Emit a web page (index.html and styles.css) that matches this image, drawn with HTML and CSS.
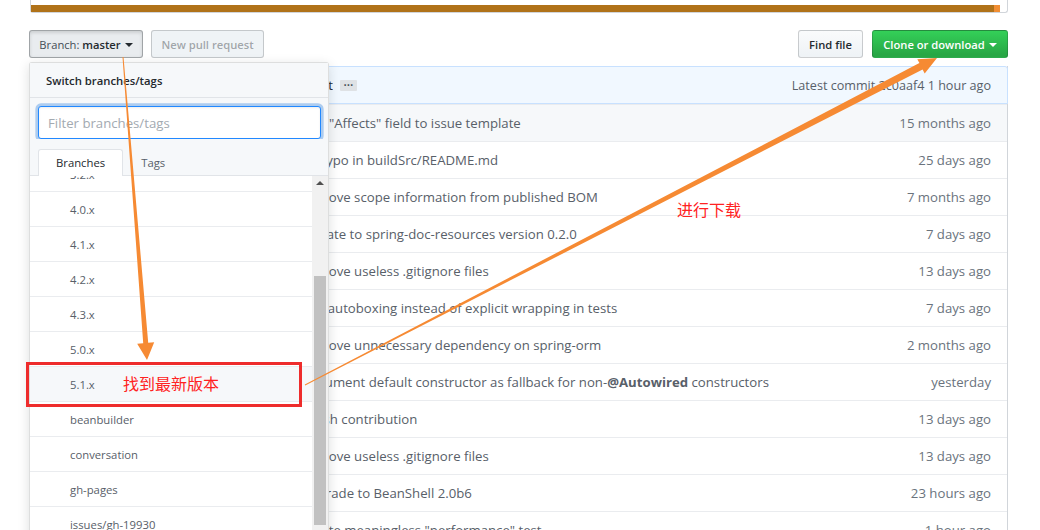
FILE: index.html
```html
<!DOCTYPE html>
<html>
<head>
    <meta charset="UTF-8">
    <link rel="stylesheet" href="styles.css">
</head>
<body>
<div class="page">
    <div class="repo">
        <div class="lang-stats">
            <span class="lang lang-java"></span>
            <span class="lang lang-kotlin"></span>
            <span class="lang lang-rest"></span>
        </div>

        <div class="file-nav">
            <div class="nav-left">
                <button class="btn btn-branch btn-selected"><span class="btn-label">Branch:</span>&nbsp;master<span class="caret"></span></button>
                <button class="btn btn-pr" disabled>New pull request</button>
            </div>
            <div class="nav-right">
                <button class="btn btn-find">Find file</button>
                <button class="btn btn-clone">Clone or download<span class="caret"></span></button>
            </div>
        </div>

        <div class="file-wrap">
            <div class="commit-tease">
                <span class="tease-msg">Upgrade to Kotlin 1.3.11 and Dokka 0.9.17 in build script</span>
                <span class="hidden-text">&hellip;</span>
                <span class="tease-right">Latest commit <span class="sha">2c0aaf4</span> 1 hour ago</span>
            </div>
            <div class="file-row hover">
                <span class="file-name">.github</span>
                <span class="file-msg">Add "Affects" field to issue template</span>
                <span class="file-age">15 months ago</span>
            </div>
            <div class="file-row">
                <span class="file-name">buildSrc</span>
                <span class="file-msg">Fix typo in buildSrc/README.md</span>
                <span class="file-age">25 days ago</span>
            </div>
            <div class="file-row">
                <span class="file-name">framework-bom</span>
                <span class="file-msg">Remove scope information from published BOM</span>
                <span class="file-age">7 months ago</span>
            </div>
            <div class="file-row">
                <span class="file-name">gradle</span>
                <span class="file-msg">Update to spring-doc-resources version 0.2.0</span>
                <span class="file-age">7 days ago</span>
            </div>
            <div class="file-row">
                <span class="file-name">integration-tests</span>
                <span class="file-msg">Remove useless .gitignore files</span>
                <span class="file-age">13 days ago</span>
            </div>
            <div class="file-row">
                <span class="file-name">spring-aop</span>
                <span class="file-msg">Use autoboxing instead of explicit wrapping in tests</span>
                <span class="file-age">7 days ago</span>
            </div>
            <div class="file-row">
                <span class="file-name">spring-aspects</span>
                <span class="file-msg">Remove unnecessary dependency on spring-orm</span>
                <span class="file-age">2 months ago</span>
            </div>
            <div class="file-row">
                <span class="file-name">spring-beans</span>
                <span class="file-msg">Document default constructor as fallback for non-<b>@Autowired</b> constructors</span>
                <span class="file-age">yesterday</span>
            </div>
            <div class="file-row">
                <span class="file-name">spring-context-indexer</span>
                <span class="file-msg">Polish contribution</span>
                <span class="file-age">13 days ago</span>
            </div>
            <div class="file-row">
                <span class="file-name">spring-context-support</span>
                <span class="file-msg">Remove useless .gitignore files</span>
                <span class="file-age">13 days ago</span>
            </div>
            <div class="file-row">
                <span class="file-name">spring-context</span>
                <span class="file-msg">Upgrade to BeanShell 2.0b6</span>
                <span class="file-age">23 hours ago</span>
            </div>
            <div class="file-row">
                <span class="file-name">spring-core</span>
                <span class="file-msg">Delete meaningless "performance" test</span>
                <span class="file-age">1 hour ago</span>
            </div>
        </div>
    </div>

    <div class="select-menu">
        <div class="menu-header">Switch branches/tags</div>
        <div class="menu-filter">
            <input type="text" class="filter-input" placeholder="Filter branches/tags">
        </div>
        <div class="menu-tabs">
            <span class="menu-tab selected">Branches</span>
            <span class="menu-tab">Tags</span>
        </div>
        <div class="menu-list">
            <div class="menu-items">
                <div class="menu-item">3.2.x</div>
                <div class="menu-item">4.0.x</div>
                <div class="menu-item">4.1.x</div>
                <div class="menu-item">4.2.x</div>
                <div class="menu-item">4.3.x</div>
                <div class="menu-item">5.0.x</div>
                <div class="menu-item focused">5.1.x</div>
                <div class="menu-item">beanbuilder</div>
                <div class="menu-item">conversation</div>
                <div class="menu-item">gh-pages</div>
                <div class="menu-item">issues/gh-19930</div>
                <div class="menu-item">issues/gh-20085</div>
            </div>
            <div class="scrollbar">
                <span class="scroll-up"></span>
                <span class="scroll-thumb"></span>
            </div>
        </div>
    </div>

    <div class="note-box"></div>
    <span class="note note-branch">找到最新版本</span>
    <span class="note note-download">进行下载</span>

    <svg class="arrows" width="1040" height="530" viewBox="0 0 1040 530">
        <polygon fill="#f68a33" points="122.5,57 123.5,57 148.2,342.8 154.2,342.3 147,360 137.2,343.7 143.2,343.2"/>
        <polygon fill="#f68a33" points="305.2,385.4 922.6,69.4 924.7,73.4 937,58 917.3,59.2 919.4,63.1 304.8,384.6"/>
    </svg>
</div>
</body>
</html>
```

FILE: styles.css
```css
* {
    box-sizing: border-box;
}
body {
    margin: 0;
    width: 1040px;
    height: 530px;
    overflow: hidden;
    background: #fff;
    font-family: "Open Sans", "Noto Sans", sans-serif;
    font-size: 13.2px;
    color: #24292e;
}
.page {
    position: relative;
    width: 1040px;
    height: 530px;
    padding-left: 29px;
}
.repo {
    width: 979px;
}

/* language bar */
.lang-stats {
    display: flex;
    height: 13px;
    margin-left: 1px;
    padding-top: 5px;
    border: 1px solid #d1d5da;
    border-top: 0;
    border-radius: 0 0 3px 3px;
}
.lang {
    height: 7px;
}
.lang-java {
    flex: 1;
    background: #b07219;
}
.lang-kotlin {
    width: 6px;
    background: #f18e33;
}
.lang-rest {
    width: 7px;
}

/* buttons */
.file-nav {
    display: flex;
    justify-content: space-between;
    margin-top: 17px;
}
.nav-left, .nav-right {
    display: flex;
}
.btn {
    display: flex;
    align-items: center;
    justify-content: center;
    height: 28px;
    padding: 0;
    font-family: inherit;
    font-size: 11.2px;
    font-weight: 600;
    color: #24292e;
    border: 1px solid rgba(27,31,35,0.2);
    border-radius: 3px;
    background-image: linear-gradient(-180deg, #fafbfc 0%, #eff3f6 90%);
}
.btn-selected {
    background: #e9ecef;
    background-image: none;
    border-color: rgba(27,31,35,0.35);
    box-shadow: inset 0 0.15em 0.3em rgba(27,31,35,0.15);
}
.btn-label {
    font-weight: 400;
    color: #444d56;
}
.btn-branch {
    width: 114px;
}
.btn-pr {
    width: 113px;
    margin-left: 8px;
    color: rgba(36,41,46,0.4);
    background: #eff3f6;
    background-image: none;
}
.btn-find {
    width: 65px;
}
.btn-clone {
    width: 136px;
    margin-left: 9px;
    color: #fff;
    background-image: linear-gradient(-180deg, #34d058 0%, #28a745 90%);
}
.caret {
    display: inline-block;
    margin-left: 4px;
    margin-top: 2px;
    border-top: 4px solid currentColor;
    border-left: 4px solid transparent;
    border-right: 4px solid transparent;
}

/* file table */
.file-wrap {
    margin-top: 8px;
    border: 1px solid #d1d5da;
    border-top: 0;
}
.commit-tease {
    display: flex;
    align-items: center;
    height: 38px;
    margin: 0 -1px;
    padding: 0 16px 0 10px;
    background: #f1f8ff;
    border: 1px solid #c8e1ff;
    border-radius: 3px 3px 0 0;
    color: #586069;
}
.tease-msg {
    width: 293px;
    overflow: hidden;
    white-space: nowrap;
    direction: rtl;
    text-align: right;
    color: #24292e;
}
.hidden-text {
    margin-left: 7px;
    width: 17px;
    height: 11px;
    line-height: 4px;
    font-size: 12px;
    font-weight: 600;
    text-align: center;
    color: #444d56;
    background: #dfe2e5;
    border-radius: 1px;
}
.tease-right {
    margin-left: auto;
    font-size: 12.6px;
}
.sha {
    color: #586069;
}
.file-row {
    display: flex;
    height: 37px;
    line-height: 20px;
    padding: 8px 16px 8px 0;
    border-top: 1px solid #eaecef;
}
.file-row.hover {
    background: #f6f8fa;
}
.file-name {
    width: 271px;
    padding-left: 40px;
    color: #0366d6;
}
.file-msg {
    flex: 1;
    color: #586069;
    white-space: nowrap;
    overflow: hidden;
}
.file-age {
    width: 130px;
    text-align: right;
    color: #6a737d;
}

/* branch menu */
.select-menu {
    position: absolute;
    left: 29px;
    top: 62px;
    width: 300px;
    height: 490px;
    display: flex;
    flex-direction: column;
    background: #fff;
    border: 1px solid rgba(27,31,35,0.15);
    border-radius: 3px;
    box-shadow: 0 3px 12px rgba(27,31,35,0.15);
    z-index: 2;
}
.menu-header {
    height: 35px;
    padding: 8px 16px;
    line-height: 20px;
    font-size: 11.3px;
    font-weight: 600;
    background: #f6f8fa;
    border-bottom: 1px solid #e1e4e8;
}
.menu-filter {
    padding: 8px 7px 0 8px;
    background: #f6f8fa;
}
.filter-input {
    display: block;
    width: 100%;
    height: 33px;
    padding: 0 9px;
    font-family: inherit;
    font-size: 13.2px;
    color: #24292e;
    background: #fff;
    border: 1px solid #2188ff;
    border-radius: 3px;
    outline: none;
    box-shadow: inset 0 1px 2px rgba(27,31,35,0.075), 0 0 0 0.2em rgba(3,102,214,0.3);
}
.filter-input::placeholder {
    color: #a3aab1;
}
.menu-tabs {
    display: flex;
    height: 37px;
    padding: 10px 8px 0;
    background: #f6f8fa;
    border-bottom: 1px solid #e1e4e8;
}
.menu-tab {
    height: 27px;
    padding: 0 17px;
    line-height: 26px;
    font-size: 11.3px;
    color: #586069;
    border: 1px solid transparent;
    border-bottom: 0;
}
.menu-tab.selected {
    color: #24292e;
    background: #fff;
    border-color: #e1e4e8;
    border-radius: 3px 3px 0 0;
}
.menu-list {
    flex: 1;
    display: flex;
    overflow: hidden;
}
.menu-items {
    flex: 1;
    margin-top: -19px;
}
.menu-item {
    height: 35px;
    padding: 1px 0 0 40px;
    line-height: 34px;
    font-size: 11.3px;
    color: #586069;
    border-bottom: 1px solid #eaecef;
}
.menu-item.focused {
    background: #f6f8fa;
}
.scrollbar {
    position: relative;
    width: 16px;
    background: #f1f1f1;
}
.scroll-up {
    position: absolute;
    left: 4px;
    top: 5px;
    border-bottom: 4px solid #505050;
    border-left: 4px solid transparent;
    border-right: 4px solid transparent;
}
.scroll-thumb {
    position: absolute;
    left: 2px;
    top: 100px;
    width: 12px;
    height: 249px;
    background: #c1c1c1;
}

/* annotations */
.note-box {
    position: absolute;
    left: 26px;
    top: 362px;
    width: 276px;
    height: 45px;
    border: 3px solid #ee2c2c;
    z-index: 3;
}
.note {
    position: absolute;
    font-family: "Noto Sans CJK SC", sans-serif;
    font-size: 16px;
    line-height: 20px;
    color: #f22;
    z-index: 3;
}
.note-branch {
    left: 123px;
    top: 373px;
}
.note-download {
    left: 677px;
    top: 199px;
}
.arrows {
    position: absolute;
    left: 0;
    top: 0;
    z-index: 4;
}
```
